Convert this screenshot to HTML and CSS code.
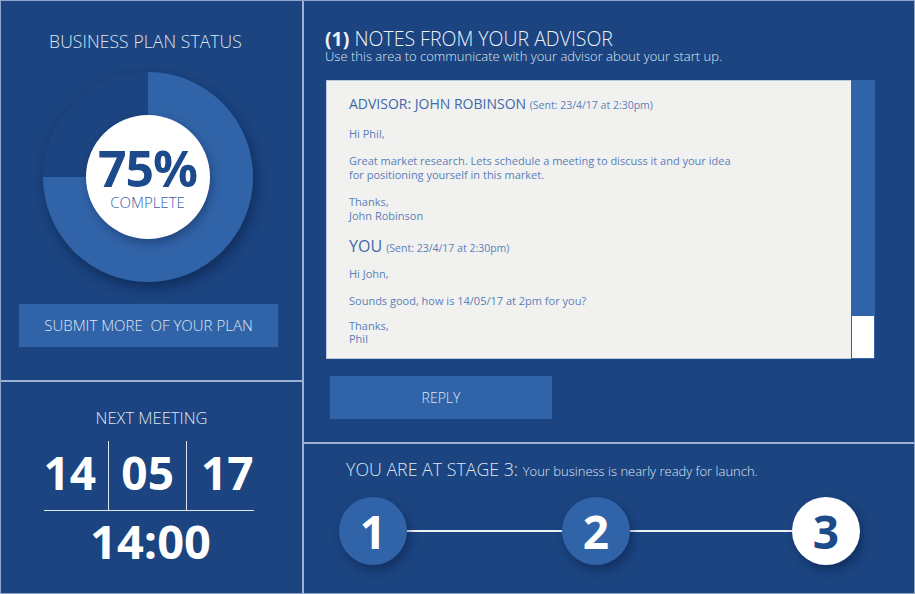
FILE: index.html
```html
<!DOCTYPE html>
<html lang="en">
<head>
<meta charset="utf-8">
<title>Business Plan Dashboard</title>
<link rel="stylesheet" href="styles.css">
</head>
<body>
<div class="app">
  <div class="left">
    <section class="status">
      <h2 class="panel-title">BUSINESS PLAN STATUS</h2>
      <div class="donut">
        <div class="donut-center">
          <div class="pct">75%</div>
          <div class="pct-label">COMPLETE</div>
        </div>
      </div>
      <button class="btn submit">SUBMIT MORE &nbsp;OF YOUR PLAN</button>
    </section>
    <section class="meeting">
      <h2 class="meeting-title">NEXT MEETING</h2>
      <div class="date-row">
        <span class="date-part first">14</span>
        <span class="date-part mid">05</span>
        <span class="date-part last">17</span>
      </div>
      <div class="time">14:00</div>
    </section>
  </div>
  <div class="right">
    <section class="notes">
      <h1 class="notes-title"><b>(1)</b> NOTES FROM YOUR ADVISOR</h1>
      <p class="notes-sub">Use this area to communicate with your advisor about your start up.</p>
      <div class="msgbox">
        <div class="messages">
          <h3 class="msg-head">ADVISOR: JOHN ROBINSON <small>(Sent: 23/4/17 at 2:30pm)</small></h3>
          <p>Hi Phil,</p>
          <p>Great market research. Lets schedule a meeting to discuss it and your idea<br>for positioning yourself in this market.</p>
          <p>Thanks,<br>John Robinson</p>
          <h3 class="msg-head you">YOU <small>(Sent: 23/4/17 at 2:30pm)</small></h3>
          <p>Hi John,</p>
          <p>Sounds good, how is 14/05/17 at 2pm for you?</p>
          <p class="sign">Thanks,<br>Phil</p>
        </div>
        <div class="scrollbar"><div class="thumb"></div></div>
      </div>
      <button class="btn reply">REPLY</button>
    </section>
    <section class="stage">
      <h2 class="stage-title">YOU ARE AT STAGE 3: <span>Your business is nearly ready for launch.</span></h2>
      <div class="steps">
        <div class="step">1</div>
        <div class="link l1"></div>
        <div class="step">2</div>
        <div class="link l2"></div>
        <div class="step current">3</div>
      </div>
    </section>
  </div>
</div>
</body>
</html>
```
FILE: styles.css
```css
* { box-sizing: border-box; }
html, body { margin: 0; padding: 0; }
body {
  font-family: "Open Sans", "Liberation Sans", sans-serif;
  background: #1b4480;
  color: #dfe6f1;
}
.app {
  width: 915px;
  height: 594px;
  display: flex;
  background: #1b4480;
  border: 1px solid #8ea6ca;
}
.left {
  width: 303px;
  display: flex;
  flex-direction: column;
  border-right: 2px solid #9cb2d3;
}
.status {
  height: 381px;
  border-bottom: 2px solid #9cb2d3;
  padding: 30px 6px 0 0;
  display: flex;
  flex-direction: column;
  align-items: center;
}
.panel-title {
  margin: 0;
  font-size: 17.5px;
  font-weight: 300;
  line-height: 20px;
  letter-spacing: 0.1px;
  transform: translateX(-3px);
}
.donut {
  margin-top: 21px;
  width: 210px;
  height: 210px;
  border-radius: 50%;
  background: conic-gradient(#3163a8 0 75%, #1b4480 75% 100%);
  box-shadow: 3px 6px 12px rgba(5, 20, 50, 0.45);
  display: flex;
  align-items: center;
  justify-content: center;
  transform: translateX(-1px);
}
.donut-center {
  width: 124px;
  height: 124px;
  border-radius: 50%;
  background: #fff;
  box-shadow: 2px 4px 8px rgba(5, 20, 50, 0.35);
  display: flex;
  flex-direction: column;
  align-items: center;
  justify-content: center;
  color: #1d4a8a;
}
.pct {
  font-size: 50px;
  font-weight: 700;
  line-height: 48px;
  letter-spacing: -1px;
}
.pct-label {
  font-size: 15px;
  font-weight: 300;
  color: #3463a5;
  line-height: 16px;
  margin-top: 2px;
}
.btn {
  font-family: inherit;
  border: 0;
  background: #3163a8;
  color: #dfe6f1;
  font-weight: 300;
  cursor: pointer;
}
.submit {
  align-self: flex-start;
  margin: 22px 0 0 18px;
  width: 259px;
  height: 43px;
  font-size: 15px;
  padding-bottom: 2px;
}
.meeting {
  flex: 1;
  display: flex;
  flex-direction: column;
  align-items: center;
  padding-top: 26px;
}
.meeting-title {
  margin: 0;
  font-size: 16.5px;
  font-weight: 300;
  line-height: 20px;
}
.date-row {
  margin-top: 13px;
  display: flex;
  width: 210px;
  height: 70px;
  border-bottom: 1.5px solid #dfe6f1;
  transform: translateX(-3px);
}
.date-part {
  font-size: 46px;
  font-weight: 700;
  color: #fff;
  display: flex;
  align-items: center;
  line-height: 1;
  padding-bottom: 7px;
}
.date-part.first {
  width: 67px;
}
.date-part.mid {
  width: 81px;
  justify-content: center;
  border-left: 1.5px solid #dfe6f1;
  border-right: 1.5px solid #dfe6f1;
}
.date-part.last {
  flex: 1;
  padding-left: 14px;
}
.time {
  font-size: 47px;
  font-weight: 700;
  color: #fff;
  line-height: 56px;
  margin-top: 2px;
  transform: translateX(-1px);
}
.right {
  flex: 1;
  display: flex;
  flex-direction: column;
}
.notes {
  height: 443px;
  border-bottom: 2px solid #9cb2d3;
  padding: 27px 0 0 21px;
}
.notes-title {
  margin: 0;
  font-size: 19.5px;
  font-weight: 300;
  line-height: 22px;
  color: #eef2f8;
}
.notes-title b { font-weight: 700; }
.notes-sub {
  margin: -1px 0 0;
  font-size: 13px;
  font-weight: 300;
  line-height: 15px;
}
.msgbox {
  margin: 16px 0 0 1px;
  width: 549px;
  height: 279px;
  display: flex;
}
.messages {
  flex: 1;
  background: #f1f1ef;
  border: 1px solid #b9c8de;
  border-right: 0;
  padding: 13px 22px 0;
  color: #5a7fba;
  font-size: 11px;
  line-height: 14px;
}
.messages p { margin: 0 0 13px; }
.messages p.sign { line-height: 13px; margin-top: -2px; }
.msg-head {
  margin: 0 0 12px;
  font-size: 14px;
  font-weight: 400;
  line-height: 20px;
  color: #3e69ab;
}
.msg-head small {
  font-size: 10.5px;
  color: #5a7fba;
}
.msg-head.you { font-size: 16px; margin-bottom: 9px; }
.scrollbar {
  width: 24px;
  background: #3163a8;
  display: flex;
  flex-direction: column;
  justify-content: flex-end;
}
.thumb {
  height: 44px;
  background: #fff;
  border: 1px solid #3163a8;
}
.reply {
  display: block;
  margin: 17px 0 0 5px;
  width: 222px;
  height: 43px;
  font-size: 14px;
}
.stage {
  flex: 1;
  padding: 14px 0 0 42px;
}
.stage-title {
  margin: 0;
  font-size: 17.8px;
  font-weight: 300;
  line-height: 22px;
}
.stage-title span { font-size: 13px; }
.steps {
  margin: 15px 0 0 -7px;
  display: flex;
  align-items: center;
}
.step {
  width: 68px;
  height: 68px;
  border-radius: 50%;
  background: #3163a8;
  color: #fff;
  font-size: 46px;
  font-weight: 700;
  display: flex;
  align-items: center;
  justify-content: center;
  line-height: 1;
  box-shadow: 3px 5px 8px rgba(5, 20, 50, 0.4);
  position: relative;
  z-index: 1;
}
.step.current {
  background: #fff;
  color: #1d4a8a;
}
.link {
  height: 2px;
  background: #eef2f8;
}
.l1 { width: 155px; }
.l2 { width: 162px; }
```
